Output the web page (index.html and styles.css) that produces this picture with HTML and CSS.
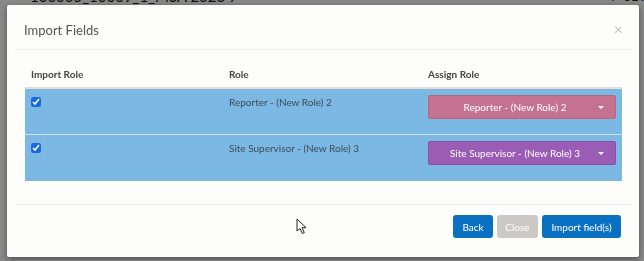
FILE: index.html
```html
<!DOCTYPE html>
<html lang="en">
<head>
    <meta charset="UTF-8">
    <meta name="viewport" content="width=device-width, initial-scale=1.0">
    <title>Import Fields</title>
    <link rel="stylesheet" href="styles.css">
</head>
<body>
    <div class="page-bar">
        <div class="page-title">100005_10009_1_MSA 2023 7</div>
        <div class="page-settings">
            <svg width="12" height="12" viewBox="0 0 24 24" fill="none" stroke="#333" stroke-width="2.5"><circle cx="12" cy="12" r="3.5"/><path d="M12 2v3M12 19v3M2 12h3M19 12h3M4.9 4.9l2.1 2.1M17 17l2.1 2.1M4.9 19.1L7 17M17 7l2.1-2.1"/></svg>
            <span>SETTINGS</span>
        </div>
    </div>

    <div class="backdrop"></div>

    <div class="modal">
        <div class="modal-header">
            <h4 class="modal-title">Import Fields</h4>
            <span class="modal-close">&times;</span>
        </div>

        <div class="modal-body">
            <table class="roles-table">
                <colgroup>
                    <col class="col-import">
                    <col class="col-role">
                    <col class="col-assign">
                </colgroup>
                <thead>
                    <tr>
                        <th>Import Role</th>
                        <th>Role</th>
                        <th>Assign Role</th>
                    </tr>
                </thead>
                <tbody>
                    <tr>
                        <td><input type="checkbox" class="check" checked></td>
                        <td>Reporter - (New Role) 2</td>
                        <td>
                            <div class="role-select role-pink">
                                <span>Reporter - (New Role) 2</span>
                                <span class="caret"></span>
                            </div>
                        </td>
                    </tr>
                    <tr>
                        <td><input type="checkbox" class="check" checked></td>
                        <td>Site Supervisor - (New Role) 3</td>
                        <td>
                            <div class="role-select role-purple">
                                <span>Site Supervisor - (New Role) 3</span>
                                <span class="caret"></span>
                            </div>
                        </td>
                    </tr>
                </tbody>
            </table>
        </div>

        <div class="modal-footer">
            <button class="btn btn-primary btn-back">Back</button>
            <button class="btn btn-disabled">Close</button>
            <button class="btn btn-primary btn-import">Import field(s)</button>
        </div>
    </div>

    <!-- mouse pointer -->
    <svg class="cursor" width="12" height="17" viewBox="0 0 12 17">
        <path d="M1 1 L1 13 L4 10.5 L6.3 15.5 L8.3 14.6 L6 9.7 L10 9.7 Z" fill="#fff" stroke="#222" stroke-width="1" stroke-linejoin="round"/>
    </svg>
</body>
</html>
```

FILE: styles.css
```css
:root {
    --row-blue: #7cb8e4;
    --btn-blue: #0a71c2;
    --text-dark: #3a3a3a;
}

body {
    margin: 0;
    background: #f4f4f4;
    font-family: 'Lato', 'Open Sans', sans-serif;
    color: var(--text-dark);
    overflow: hidden;
}

/* Page behind the dialog */
.page-bar {
    display: flex;
    justify-content: space-between;
    align-items: center;
    height: 20px;
    margin-top: -14px;
    padding: 0 0 0 30px;
    font-size: 15px;
    color: #222;
}

.page-settings {
    display: flex;
    flex-shrink: 0;
    align-items: center;
    gap: 5px;
    margin-right: -40px;
    font-size: 13px;
}

.backdrop {
    position: fixed;
    inset: 0;
    background: rgba(0, 0, 0, 0.44);
}

/* Dialog */
.modal {
    position: fixed;
    left: 7px;
    top: 5px;
    width: 632px;
    height: 252px;
    background: #fdfdfc;
    border-radius: 2px;
    box-shadow: 0 2px 6px rgba(0, 0, 0, 0.45);
    display: flex;
    flex-direction: column;
}

.modal-header {
    height: 45px;
    margin: 0 7px 0 8px;
    padding: 0 9px;
    border-bottom: 1px solid #e9e9e7;
    display: flex;
    align-items: center;
    justify-content: space-between;
    box-sizing: border-box;
}

.modal-title {
    margin: 0;
    font-size: 13px;
    font-weight: 400;
    color: #555;
    padding-top: 6px;
}

.modal-close {
    font-size: 16px;
    color: #c4c4c4;
    margin-top: 2px;
}

.modal-body {
    padding: 11px 17px 0 18px;
    height: 154px;
    box-sizing: border-box;
}

.roles-table {
    width: 597px;
    table-layout: fixed;
    border-collapse: collapse;
    font-size: 10px;
}

.col-import { width: 198px; }
.col-role { width: 199px; }
.col-assign { width: 200px; }

.roles-table th {
    text-align: left;
    font-weight: 700;
    color: #444;
    padding: 6px;
    height: 14px;
    border-bottom: 2px solid #e8ddd5;
}

.roles-table td {
    background: var(--row-blue);
    vertical-align: top;
    padding: 7px 6px 0;
    height: 38px;
    color: #3d4a55;
    border-bottom: 1px solid #cfe3f1;
}

.roles-table tbody tr:last-child td {
    border-bottom: none;
    height: 39px;
}

.check {
    width: 10px;
    height: 10px;
    margin: 1px 0 0 0;
    accent-color: #1769e0;
}

.role-select {
    display: flex;
    align-items: center;
    justify-content: center;
    position: relative;
    height: 24px;
    margin-top: -1px;
    padding-right: 14px;
    border-radius: 2px;
    color: #fff;
    font-size: 10px;
    box-sizing: border-box;
}

.role-pink {
    background: #c4728f;
    border: 1px solid #b8667f;
}

.role-purple {
    background: #9a5cb4;
    border: 1px solid #8b4fa6;
}

.caret {
    position: absolute;
    right: 11px;
    top: 10px;
    width: 0;
    height: 0;
    border-left: 3px solid transparent;
    border-right: 3px solid transparent;
    border-top: 3px solid #fff;
}

.modal-footer {
    margin: 0 7px 0 8px;
    border-top: 1px solid #e9e9e7;
    padding: 10px 11px 0;
    display: flex;
    justify-content: flex-end;
    gap: 4px;
}

.btn {
    height: 23px;
    border: none;
    border-radius: 3px;
    color: #fff;
    font-family: 'Lato', sans-serif;
    font-size: 10px;
    padding: 0;
    cursor: pointer;
}

.btn-primary {
    background: var(--btn-blue);
}

.btn-back { width: 40px; }
.btn-import { width: 79px; }

.btn-disabled {
    background: #ccc8c5;
    width: 41px;
}

.cursor {
    position: fixed;
    left: 296px;
    top: 218px;
}
```
